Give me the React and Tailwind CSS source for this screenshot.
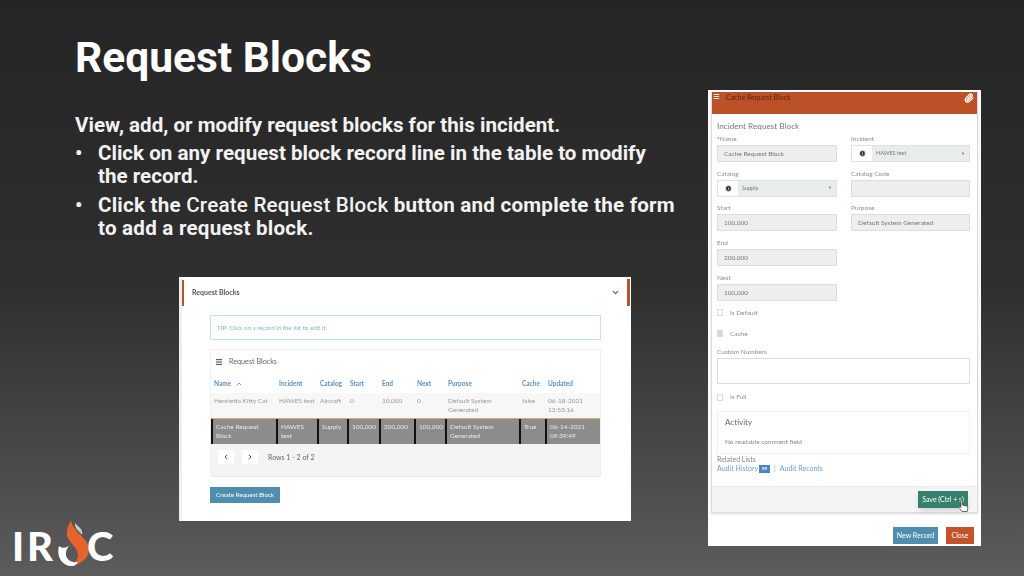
import { Menu, Paperclip, ChevronUp, ChevronDown, ChevronLeft, ChevronRight, Info, Check } from 'lucide-react'

const cols = 'grid grid-cols-[65px_41px_30px_32px_35px_31px_74px_26px_57px]'
const headers = ['Name', 'Incident', 'Catalog', 'Start', 'End', 'Next', 'Purpose', 'Cache', 'Updated']
const row1 = ['Henrietta Kitty Cat', 'HAWES test', 'Aircraft', '0', '10,000', '0', 'Default System Generated', 'false', '06-18-2021 12:53:16']
const row2 = ['Cache Request Block', 'HAWES test', 'Supply', '100,000', '200,000', '100,000', 'Default System Generated', 'True', '06-14-2021 09:39:49']

function Field({ label, value, required, className = '' }) {
  return (
    <div className={`flex flex-col ${className}`}>
      <div className="h-[12px] text-[6.5px] leading-[12px] text-[#8d8d8d]">
        {required && <span className="text-[#555]">*</span>}
        {label}
      </div>
      <div className="h-[17px] bg-[#eeeeee] border border-[#dedede] pl-[6px] text-[6.5px] leading-[15px] text-[#777]">{value}</div>
    </div>
  )
}

function SelectField({ label, value, className = '' }) {
  return (
    <div className={`flex flex-col ${className}`}>
      <div className="h-[12px] text-[6.5px] leading-[12px] text-[#8d8d8d]">{label}</div>
      <div className="h-[17px] flex border border-[#e2e2e2]">
        <div className="w-[20px] flex items-center justify-center bg-white">
          <Info size={7} fill="#333" stroke="#fff" />
        </div>
        <div className="flex-1 flex items-center justify-between bg-[#e9ecec] px-[4px] text-[5.5px] text-[#777]">
          <span>{value}</span>
          <span className="text-[4px]">▼</span>
        </div>
      </div>
    </div>
  )
}

function CheckRow({ label, checked, className = '' }) {
  return (
    <div className={`flex items-center gap-[7px] text-[6.5px] text-[#8d8d8d] ${className}`}>
      <div className={`w-[6px] h-[7px] border border-[#ddd] flex items-center justify-center ${checked ? 'bg-[#d4d4d4]' : 'bg-white'}`}>
        {checked && <Check size={5} stroke="#fff" />}
      </div>
      {label}
    </div>
  )
}

function RequestBlocksShot() {
  return (
    <div className="w-[452px] h-[244px] ml-[179px] mt-[37px] bg-white border-l-[3px] border-[#efefef] relative blur-[0.3px] font-['Lato',sans-serif]">
      <div className="absolute left-0 top-[3px] w-[2px] h-[26px] bg-[#b5532f]" />
      <div className="absolute right-[1px] top-[2px] w-[3px] h-[27px] bg-[#b5532f]" />
      <div className="flex items-center justify-between h-[30px] pl-[10px] pr-[11px]">
        <span className="text-[7px] font-bold text-[#555]">Request Blocks</span>
        <ChevronDown size={9} strokeWidth={3} className="text-[#555]" />
      </div>
      <div className="ml-[28px] w-[391px]">
        <div className="h-[25px] mt-[8px] border border-[#c5e3e8] pl-[6px] text-[6.2px] leading-[23px] text-[#7fb6cc]">
          TIP: Click on a record in the list to edit it.
        </div>
        <div className="mt-[9px] border border-[#f0f0f0] border-b-0">
          <div className="flex items-center h-[25px] pl-[4px] gap-[6px] text-[7.2px] text-[#666]">
            <Menu size={8} strokeWidth={3} className="text-[#444] -mt-[2px]" />
            Request Blocks
          </div>
          <div className={`${cols} h-[18px] items-center text-[6.5px] font-bold text-[#5b8fc7]`}>
            {headers.map((h) => (
              <div key={h} className="pl-[3px] flex items-center gap-[4px] whitespace-nowrap">
                {h}
                {h === 'Name' && <ChevronUp size={8} className="text-[#666]" />}
              </div>
            ))}
          </div>
          <div className={`${cols} h-[25px] bg-[#f7f7f7] pt-[3px] text-[6.5px] leading-[9px] text-[#999]`}>
            {row1.map((c, i) => (
              <div key={i} className="pl-[3px]">{c}</div>
            ))}
          </div>
          <div className={`${cols} h-[26px] bg-[#8c8c8c] border-t-[1.5px] border-[#d8ac6a] text-[6.5px] leading-[9px] text-[#e8e8e8]`}>
            {row2.map((c, i) => (
              <div key={i} className="pl-[3px] pr-[5px] pt-[3px] border-l-2 border-[#111]">{c}</div>
            ))}
          </div>
          <div className="h-[33px] bg-[#f4f4f4] border-b border-[#e6e6e6] flex items-start pt-[6px] pl-[7px] text-[7px] text-[#666]">
            <div className="w-[16px] h-[14px] bg-white flex items-center justify-center"><ChevronLeft size={8} strokeWidth={3} className="text-[#555]" /></div>
            <div className="w-[16px] h-[14px] ml-[8px] bg-white flex items-center justify-center"><ChevronRight size={8} strokeWidth={3} className="text-[#555]" /></div>
            <span className="ml-[10px] leading-[14px]">Rows 1 - 2 of 2</span>
          </div>
        </div>
        <div className="mt-[10px] w-[70px] h-[16px] bg-[#4f8eae] text-white text-[6.2px] leading-[16px] text-center">Create Request Block</div>
      </div>
    </div>
  )
}

function CacheBlockShot() {
  return (
    <div className="w-[273px] h-[456px] mt-[90px] ml-[27px] bg-white pt-[2px] relative blur-[0.3px] font-['Lato',sans-serif] shrink-0">
      <div className="mx-[3px] border border-t-0 border-[#dcdcdc] shadow-sm h-[421px] flex flex-col">
        <div className="h-[22px] bg-[#bc5127] flex justify-between pl-[1px] pr-[3px] pt-[1px]">
          <div className="flex gap-[6px] text-[7px] text-[#5a2310]">
            <Menu size={7} strokeWidth={3} className="text-white" />
            <span className="leading-[9px]">Cache Request Block</span>
          </div>
          <Paperclip size={10} strokeWidth={3} className="text-white" />
        </div>
        <div className="flex-1 pl-[5px] pr-[7px] pt-[7px]">
          <div className="text-[8.2px] leading-[10px] text-[#777]">Incident Request Block</div>
          <div className="grid grid-cols-[120px_119px] gap-x-[14px] gap-y-[5.7px] mt-[2px]">
            <Field label="Name" value="Cache Request Block" required />
            <SelectField label="Incident" value="HAWES test" />
            <SelectField label="Catalog" value="Supply" />
            <Field label="Catalog Code" value="" />
            <Field label="Start" value="100,000" />
            <Field label="Purpose" value="Default System Generated" />
            <Field label="End" value="200,000" />
            <div />
            <Field label="Next" value="100,000" />
          </div>
          <CheckRow label="Is Default" className="mt-[7px]" />
          <CheckRow label="Cache" checked className="mt-[11px]" />
          <div className="mt-[9px] text-[6.5px] leading-[10px] text-[#8d8d8d]">Custom Numbers</div>
          <div className="h-[26px] mt-[1px] border border-[#dedede]" />
          <CheckRow label="Is Full" className="mt-[8px]" />
          <div className="h-[43px] mt-[9px] border border-[#f2f2f2] pl-[7px] pt-[4px]">
            <div className="text-[8px] text-[#666]">Activity</div>
            <div className="mt-[9px] text-[6.5px] text-[#888]">No readable comment field</div>
          </div>
          <div className="mt-[1px] text-[7px] leading-[9px] text-[#888]">Related Lists</div>
          <div className="flex items-center text-[7px] leading-[9px] text-[#6f9fd0]">
            Audit History
            <span className="ml-[1px] w-[11px] h-[8px] bg-[#4a86c0] text-white text-[4.5px] leading-[8px] text-center font-bold">59</span>
            <span className="mx-[4px] text-[#aaa]">|</span>
            Audit Records
          </div>
        </div>
        <div className="h-[26px] bg-[#f4f4f4] border-t border-[#ececec] flex justify-end pt-[4px] pr-[9px]">
          <div className="w-[50px] h-[17px] bg-[#36806d] text-white text-[7px] leading-[17px] text-center shadow-md">Save (Ctrl + s)</div>
        </div>
      </div>
      <svg className="absolute left-[250px] top-[409px]" width="11" height="14" viewBox="0 0 11 14">
        <path d="M3 1.5c0-1 1.6-1 1.6 0V6l4 1c1 .3 1.3 1 1.2 2l-.6 3.5H4L1 8.5c-.5-1 .7-1.7 1.3-1L3 8.5z" fill="#fff" stroke="#333" strokeWidth="0.7" />
      </svg>
      <div className="flex justify-end gap-[8px] mt-[14px] pr-[7px] text-[7px] text-white">
        <div className="w-[45px] h-[17px] bg-[#4f8eae] leading-[17px] text-center">New Record</div>
        <div className="w-[28px] h-[17px] bg-[#c4532b] leading-[17px] text-center">Close</div>
      </div>
    </div>
  )
}

function Logo() {
  return (
    <div className="flex items-center h-[50px] w-[110px] ml-[12px] -mt-[3px] text-white font-['Lato',sans-serif] font-black text-[40px] leading-none">
      <span className="tracking-[3px] mt-[6px]">IR</span>
      <svg className="w-[40px] h-[50px] -ml-[1px] shrink-0" viewBox="48 518 40 50">
        <path d="M64 520C60 528 58 534 62 540C66 546 71 549 71 555C71 560 68 563 64 565C74 565 82 558 82 549C82 541 74 537 69 530C66 526 64 524 64 520Z" fill="#e8622c" />
        <path d="M68 523C67 528 72 531 75 535C76 531 74 529 72 527C70 525 69 524 68 523Z" fill="#c9c9c9" />
        <path d="M52 546C49 558 56 566 65 566C68 566 70 564 71 562C66 563 60 561 59 555C58 550 62 546 63 545C60 548 55 549 52 546Z" fill="#fff" />
      </svg>
      <span className="-ml-[8px] mt-[6px]">C</span>
    </div>
  )
}

export default function App() {
  return (
    <div className="w-[1024px] h-[576px] overflow-hidden flex bg-gradient-to-b from-[#252525] via-[#2f2f2f] to-[#5c5c5c] font-['Roboto',sans-serif]">
      <div className="w-[681px] shrink-0 flex flex-col">
        <h1 className="ml-[75px] mt-[33px] text-[42.5px] leading-[50px] font-bold text-white">Request Blocks</h1>
        <div className="ml-[75px] mt-[31px] text-[20.6px] leading-[23px] font-bold text-[#f2f2f2]">
          <p className="h-[28px]">View, add, or modify request blocks for this incident.</p>
          <ul className="w-[600px]">
            <li className="flex">
              <span className="w-[23px] shrink-0">•</span>
              <span>Click on any request block record line in the table to modify the record.</span>
            </li>
            <li className="flex mt-[6px]">
              <span className="w-[23px] shrink-0">•</span>
              <span className="tracking-[0.22px]">Click the <span className="font-medium">Create Request Block</span> button and complete the form to add a request block.</span>
            </li>
          </ul>
        </div>
        <RequestBlocksShot />
        <Logo />
      </div>
      <CacheBlockShot />
    </div>
  )
}
